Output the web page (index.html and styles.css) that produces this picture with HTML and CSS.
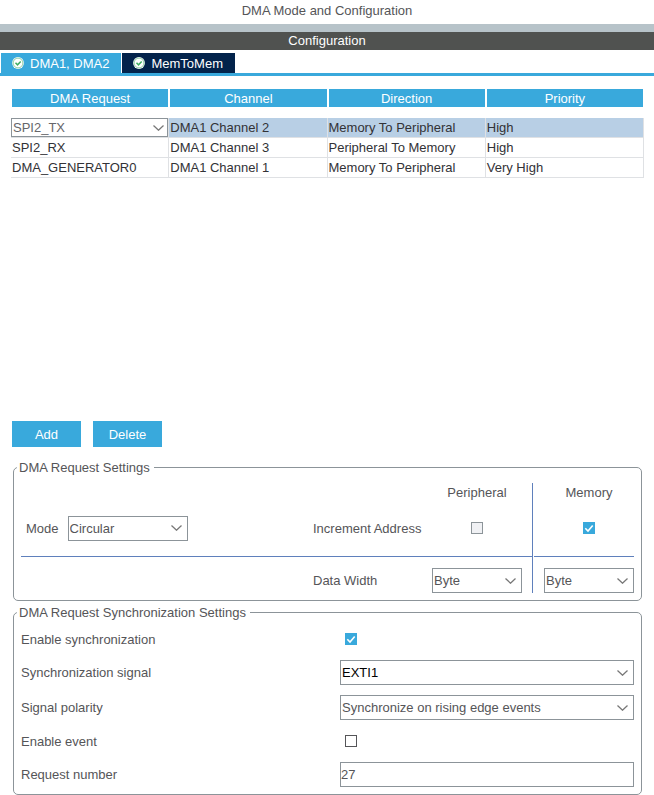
FILE: index.html
```html
<!DOCTYPE html>
<html lang="en">
<head>
<meta charset="utf-8">
<title>DMA Mode and Configuration</title>
<link rel="stylesheet" href="styles.css">
</head>
<body>

<h1 class="title">DMA Mode and Configuration</h1>
<div class="splitter"></div>
<h2 class="bar">Configuration</h2>

<div class="tabs">
    <button type="button" class="tab active">
        <svg class="ok" viewBox="0 0 12 12"><circle cx="6" cy="6" r="5.9" fill="#fff"/><circle cx="6" cy="6" r="4.9" fill="#fff" stroke="#8fd0a4"/><path d="M3.5 5.8l2 2 3.2-3.4" fill="none" stroke="#3fae62" stroke-width="1.5"/></svg>
        DMA1, DMA2
    </button>
    <button type="button" class="tab">
        <svg class="ok" viewBox="0 0 12 12"><circle cx="6" cy="6" r="5.9" fill="#fff"/><circle cx="6" cy="6" r="4.9" fill="#fff" stroke="#8fd0a4"/><path d="M3.5 5.8l2 2 3.2-3.4" fill="none" stroke="#3fae62" stroke-width="1.5"/></svg>
        MemToMem
    </button>
</div>

<div class="requests">
    <table>
        <thead>
            <tr><th>DMA Request</th><th>Channel</th><th>Direction</th><th>Priority</th></tr>
        </thead>
        <tbody>
            <tr class="selected">
                <td class="edit"><select aria-label="DMA Request"><option>SPI2_TX</option><option>SPI2_RX</option></select></td>
                <td>DMA1 Channel 2</td><td>Memory To Peripheral</td><td>High</td>
            </tr>
            <tr><td>SPI2_RX</td><td>DMA1 Channel 3</td><td>Peripheral To Memory</td><td>High</td></tr>
            <tr><td>DMA_GENERATOR0</td><td>DMA1 Channel 1</td><td>Memory To Peripheral</td><td>Very High</td></tr>
        </tbody>
    </table>
</div>

<div class="buttons">
    <button type="button" class="btn">Add</button>
    <button type="button" class="btn">Delete</button>
</div>

<fieldset>
    <legend>DMA Request Settings</legend>
    <div class="settings">
        <div class="vline"></div>
        <span class="head periph" id="periph">Peripheral</span>
        <span class="head mem" id="mem">Memory</span>

        <div class="mode">
            <label for="mode">Mode</label>
            <select id="mode"><option>Circular</option><option>Normal</option></select>
        </div>
        <span class="name" id="inc">Increment Address</span>
        <div class="periph"><input type="checkbox" aria-labelledby="inc periph" disabled></div>
        <div class="mem"><input type="checkbox" aria-labelledby="inc mem" checked></div>

        <hr class="left">
        <hr class="right">

        <span class="name width" id="dw">Data Width</span>
        <div class="periph width"><select aria-labelledby="dw periph"><option>Byte</option><option>Half Word</option><option>Word</option></select></div>
        <div class="mem width"><select aria-labelledby="dw mem"><option>Byte</option><option>Half Word</option><option>Word</option></select></div>
    </div>
</fieldset>

<fieldset>
    <legend>DMA Request Synchronization Settings</legend>
    <div class="sync">
        <label for="ensync">Enable synchronization</label>
        <input type="checkbox" id="ensync" checked>

        <label for="signal">Synchronization signal</label>
        <select id="signal" class="dark"><option>EXTI1</option></select>

        <label for="polarity">Signal polarity</label>
        <select id="polarity"><option>Synchronize on rising edge events</option></select>

        <label for="event">Enable event</label>
        <input type="checkbox" id="event">

        <label for="number">Request number</label>
        <input type="text" id="number" value="27">
    </div>
</fieldset>

</body>
</html>
```

FILE: styles.css
```css
*{
    box-sizing: border-box;
}
body{
    margin: 0;
    background-color: white;
    color: #555558;
    font: 13px/15px "Liberation Sans", Arial, sans-serif;
}
button, select, input{
    font: inherit;
    color: inherit;
    margin: 0;
}
.title{
    margin: 0;
    height: 24px;
    font-size: 13px;
    line-height: 22px;
    font-weight: normal;
    text-align: center;
}
.splitter{
    height: 8px;
    background-color: #b7c3c9;
}
.bar{
    margin: 0;
    background-color: #505250;
    color: white;
    font-size: 13px;
    line-height: 18px;
    font-weight: normal;
    text-align: center;
}

/* tabs */
.tabs{
    display: flex;
    gap: 1px;
    margin-top: 3px;
    padding-left: 1px;
    border-bottom: 3px solid #39a9dc;
}
.tab{
    display: flex;
    align-items: center;
    gap: 6px;
    height: 20px;
    padding: 0 12px 0 11px;
    border: 0;
    background-color: #03234b;
    color: white;
}
.tab.active{
    background-color: #39a9dc;
}
.ok{
    width: 12px;
    height: 12px;
}

/* table of requests */
.requests{
    min-height: 332px;
    padding: 13px 10px 0 11px;
}
table{
    width: 100%;
    table-layout: fixed;
    border-collapse: separate;
    border-spacing: 0;
}
th{
    height: 18px;
    padding: 0;
    border-left: 1px solid white;
    border-right: 1px solid white;
    background-color: #39a9dc;
    color: white;
    font-weight: normal;
}
tbody::before{
    content: "";
    display: block;
    height: 11px;
}
td{
    height: 20px;
    padding: 0 1px;
    border-right: 1px solid #dfe1e4;
    border-bottom: 1px solid #dfe1e4;
    color: #323236;
    white-space: nowrap;
}
.selected td{
    background-color: #b8cfe5;
}
.selected .edit{
    padding: 0;
    background-color: white;
}
.edit select{
    display: block;
    height: 19px;
    background-position: right 3px center;
    color: #66666a;
}

.buttons{
    display: flex;
    gap: 12px;
    padding: 13px 12px;
}
.btn{
    width: 69px;
    height: 26px;
    padding: 0;
    border: 0;
    background-color: #39a9dc;
    color: white;
}

/* form controls */
select{
    appearance: none;
    width: 100%;
    height: 25px;
    padding: 0 1px;
    border: 1px solid #8c9499;
    border-radius: 0;
    background: white url("data:image/svg+xml,%3Csvg xmlns='http://www.w3.org/2000/svg' width='11' height='6'%3E%3Cpath d='M.5.5l5 4.7 5-4.7' fill='none' stroke='%23777' stroke-width='1.3'/%3E%3C/svg%3E") no-repeat right 5px center;
}
select.dark{
    color: black;
}
input[type=text]{
    width: 100%;
    height: 25px;
    padding: 0;
    border: 1px solid #8c9499;
}
input[type=checkbox]{
    appearance: none;
    display: block;
    width: 12px;
    height: 12px;
    border: 1px solid #555558;
    background-color: white;
}
input[type=checkbox]:checked{
    border: 0;
    background: #39a9dc url("data:image/svg+xml,%3Csvg xmlns='http://www.w3.org/2000/svg' width='12' height='12'%3E%3Cpath d='M2.3 6.2l2.7 2.8 4.7-5.6' fill='none' stroke='%23fff' stroke-width='1.6'/%3E%3C/svg%3E");
}
input[type=checkbox]:disabled{
    border-color: #8c9499;
    background-color: #f0f1f4;
}

/* groups */
fieldset{
    min-width: 0;
    margin: 0 12px 4px 13px;
    padding: 8px 7px 7px;
    border: 1px solid #8c9499;
    border-radius: 5px;
}
fieldset:last-child{
    margin-bottom: 0;
}
legend{
    margin-left: -4px;
    padding: 0 4px 0 2px;
}
.settings{
    display: grid;
    grid-template-columns: 1fr 119px 100px 102px;
    grid-template-rows: 18px 54px 1px 37px;
    align-items: center;
}
.vline{
    grid-column: 4;
    grid-row: 1 / 5;
    align-self: stretch;
    border-left: 1px solid #5f80bc;
}
.head{
    grid-row: 1;
    text-align: center;
}
.name{
    grid-column: 2;
}
.periph{
    grid-column: 3;
    padding-right: 10px;
}
.mem{
    grid-column: 4;
    padding-left: 12px;
}
.settings input{
    margin: 0 auto;
}
.mode, .name, .mode ~ .periph, .mode ~ .mem{
    grid-row: 2;
}
.mode{
    display: flex;
    align-items: center;
    gap: 9px;
    padding-left: 5px;
}
.mode select{
    width: 120px;
}
.settings .width{
    grid-row: 4;
    padding-top: 12px;
}
hr{
    grid-row: 3;
    width: auto;
    height: 1px;
    margin: 1px 0 0;
    border: 0;
    background-color: #5f80bc;
}
hr.left{
    grid-column: 1 / 4;
    justify-self: stretch;
}
hr.right{
    grid-column: 4;
    justify-self: stretch;
    margin-left: 2px;
}
.sync{
    display: grid;
    grid-template-columns: 319px 1fr;
    grid-template-rows: 22px 25px 25px 22px 25px;
    row-gap: 10px;
    align-items: center;
}
.sync input[type=checkbox]{
    margin-left: 5px;
}
```
